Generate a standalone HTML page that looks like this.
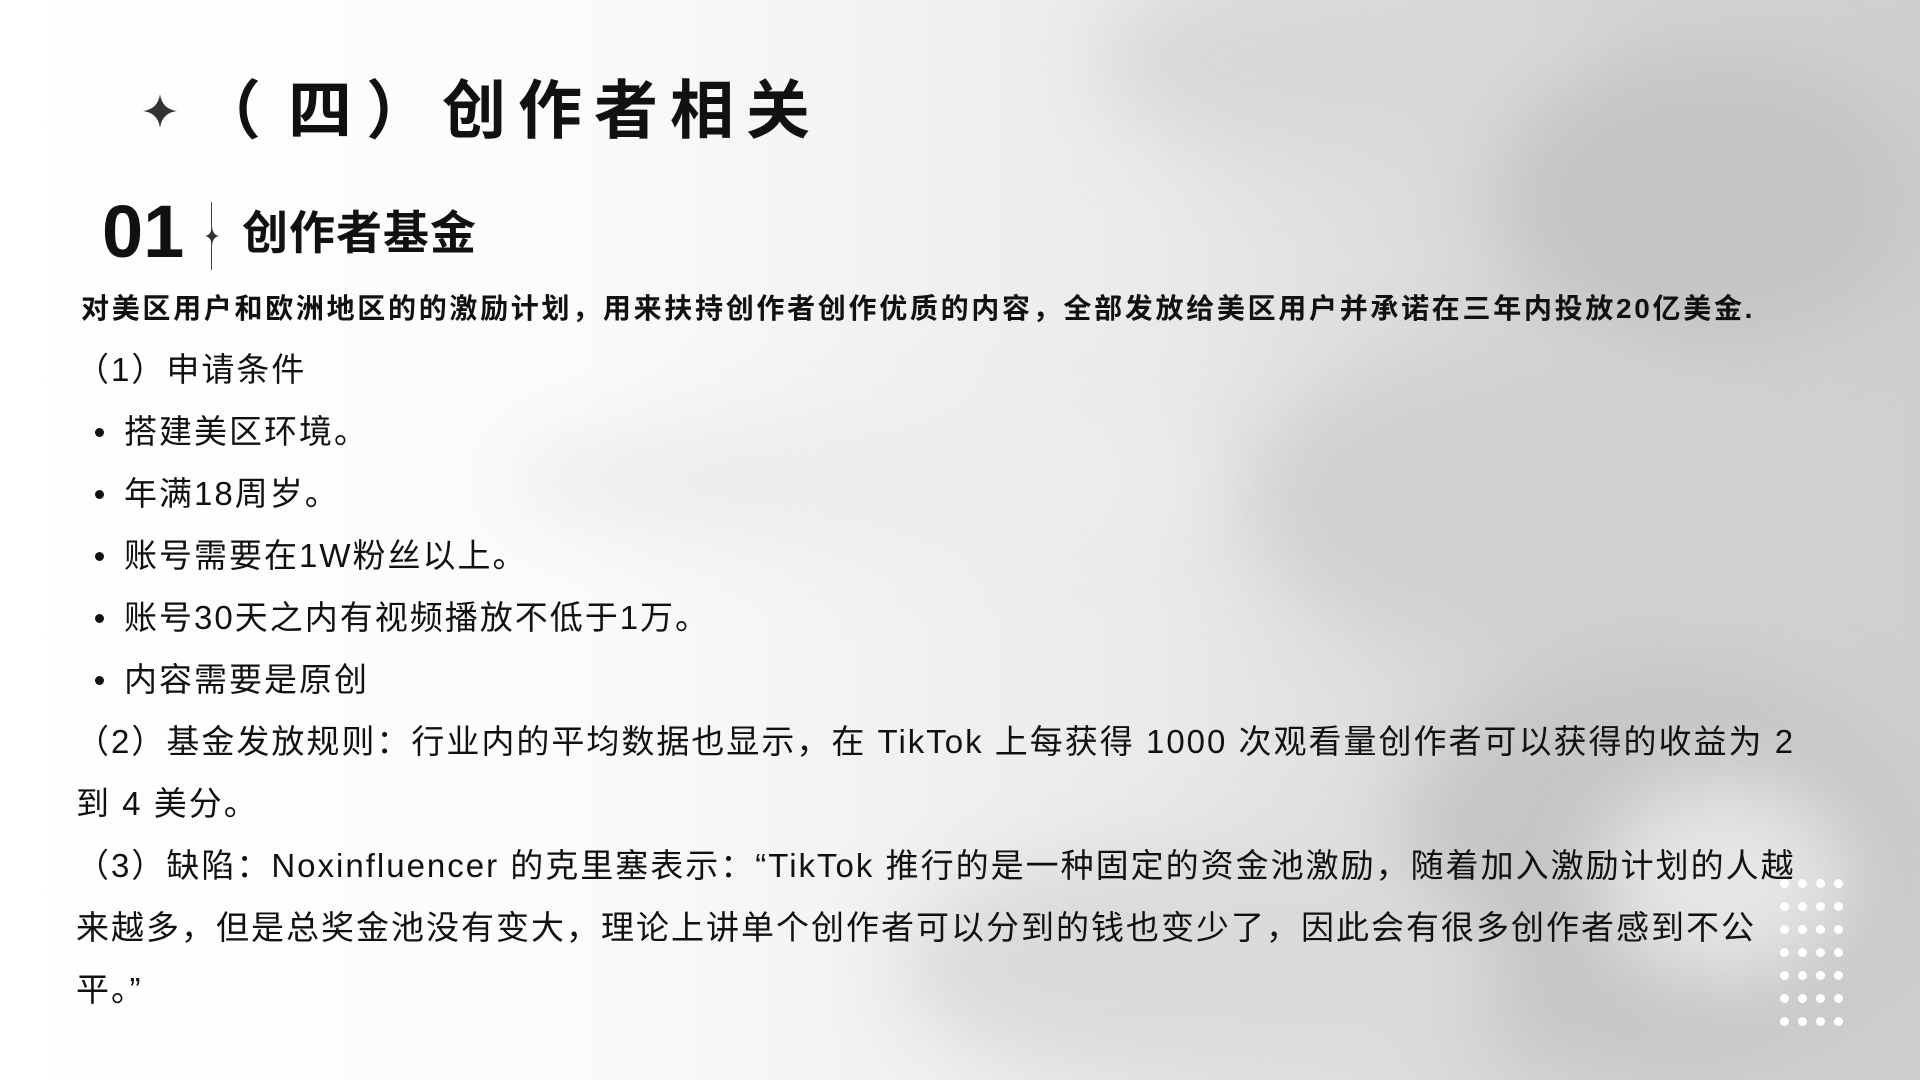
<!DOCTYPE html>
<html><head><meta charset="utf-8"><style>
html,body{margin:0;padding:0;}
body{width:1920px;height:1080px;overflow:hidden;position:relative;background:#fff;font-family:"Liberation Sans","Noto Sans CJK SC",sans-serif;color:#111;}
.bg{position:absolute;inset:0;background:linear-gradient(90deg,#fff 0%,#fbfbfb 30%,#eaeaea 60%,#d6d6d6 80%,#cfcfcf 100%);}
.b{position:absolute;border-radius:50%;filter:blur(40px);}
.t{position:absolute;white-space:nowrap;}
.tc{position:absolute;top:71px;font-size:64px;font-weight:bold;line-height:80px;}
.num{left:102px;top:192px;font-size:74px;font-weight:bold;line-height:80px;font-family:"Liberation Sans",sans-serif;}
.sub{left:242px;top:205px;font-size:46px;font-weight:bold;line-height:56px;letter-spacing:1px;}
.bold{left:81px;top:290px;font-size:28px;font-weight:bold;letter-spacing:2.7px;line-height:38px;}
.body{position:absolute;left:76px;top:339px;font-size:33px;letter-spacing:2px;line-height:62px;white-space:nowrap;}
.li{padding-left:48px;position:relative;}
.li:before{content:"";position:absolute;left:19px;top:27px;width:9px;height:9px;border-radius:50%;background:#111;}
.dots{position:absolute;left:1780px;top:879px;width:72px;}
.dots i{display:inline-block;width:9px;height:9px;border-radius:50%;background:#fff;margin:0 9px 9px 0;}
</style></head><body>
<div class="bg"></div>
<div class="b" style="left:1100px;top:-40px;width:500px;height:200px;background:#d8d8d8;"></div>
<div class="b" style="left:1500px;top:50px;width:420px;height:300px;background:#c4c4c4;"></div>
<div class="b" style="left:1250px;top:350px;width:500px;height:300px;background:#d0d0d0;"></div>
<div class="b" style="left:500px;top:420px;width:700px;height:120px;background:#ececec;"></div>
<div class="b" style="left:1400px;top:650px;width:520px;height:430px;background:#c6c6c6;"></div>
<div class="b" style="left:900px;top:850px;width:600px;height:230px;background:#dadada;"></div>
<div class="b" style="left:1600px;top:780px;width:250px;height:200px;background:#e6e6e6;"></div>

<svg class="t" style="left:143px;top:94px" width="34" height="34" viewBox="0 0 34 34"><path d="M17 0 Q19 15 34 17 Q19 19 17 34 Q15 19 0 17 Q15 15 17 0Z" fill="#333"/></svg>
<div class="tc" style="left:197px">（</div>
<div class="tc" style="left:288px">四</div>
<div class="tc" style="left:366px">）</div>
<div class="tc" style="left:442px">创</div>
<div class="tc" style="left:518px">作</div>
<div class="tc" style="left:594px">者</div>
<div class="tc" style="left:670px">相</div>
<div class="tc" style="left:746px">关</div>

<div class="t num">01</div>
<div class="t" style="left:211px;top:202px;width:1px;height:68px;background:#444;"></div>
<svg class="t" style="left:205px;top:227px" width="14" height="18" viewBox="0 0 14 18"><path d="M7 0 Q8 8 14 9 Q8 10 7 18 Q6 10 0 9 Q6 8 7 0Z" fill="#333"/></svg>
<div class="t sub">创作者基金</div>

<div class="t bold">对美区用户和欧洲地区的的激励计划，用来扶持创作者创作优质的内容，全部发放给美区用户并承诺在三年内投放20亿美金.</div>

<div class="body">
<div>（1）申请条件</div>
<div class="li">搭建美区环境。</div>
<div class="li">年满18周岁。</div>
<div class="li">账号需要在1W粉丝以上。</div>
<div class="li">账号30天之内有视频播放不低于1万。</div>
<div class="li">内容需要是原创</div>
<div>（2）基金发放规则：行业内的平均数据也显示，在 TikTok 上每获得 1000 次观看量创作者可以获得的收益为 2</div>
<div>到 4 美分。</div>
<div>（3）缺陷：Noxinfluencer 的克里塞表示：“TikTok 推行的是一种固定的资金池激励，随着加入激励计划的人越</div>
<div>来越多，但是总奖金池没有变大，理论上讲单个创作者可以分到的钱也变少了，因此会有很多创作者感到不公</div>
<div>平。”</div>
</div>

<div class="dots">
<i></i><i></i><i></i><i></i><i></i><i></i><i></i><i></i><i></i><i></i><i></i><i></i><i></i><i></i><i></i><i></i><i></i><i></i><i></i><i></i><i></i><i></i><i></i><i></i><i></i><i></i><i></i><i></i>
</div>
</body></html>
